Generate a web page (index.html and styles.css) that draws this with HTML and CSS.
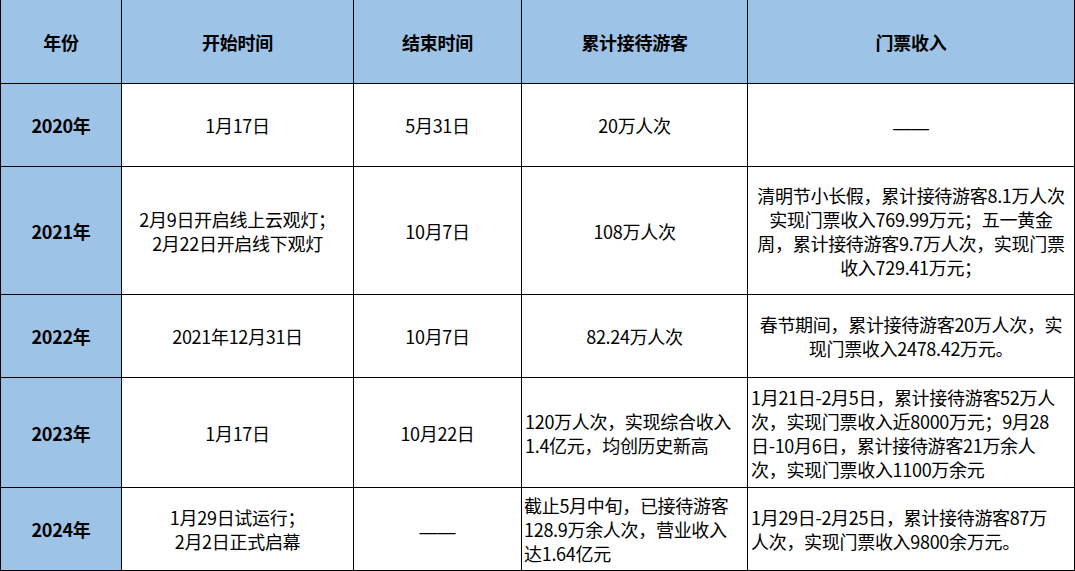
FILE: index.html
```html
<!DOCTYPE html>
<html lang="zh-CN">
<head>
<meta charset="utf-8">
<title>统计表</title>
<link rel="stylesheet" href="styles.css">
</head>
<body>
<div class="sheet">
  <div class="cell head first">年份</div>
  <div class="cell head">开始时间</div>
  <div class="cell head">结束时间</div>
  <div class="cell head">累计接待游客</div>
  <div class="cell head">门票收入</div>

  <div class="cell year first">2020年</div>
  <div class="cell">1月17日</div>
  <div class="cell">5月31日</div>
  <div class="cell">20万人次</div>
  <div class="cell"><span class="dash">——</span></div>

  <div class="cell year first">2021年</div>
  <div class="cell">2月9日开启线上云观灯；<br>2月22日开启线下观灯</div>
  <div class="cell">10月7日</div>
  <div class="cell">108万人次</div>
  <div class="cell">清明节小长假，累计接待游客8.1万人次<br>实现门票收入769.99万元；五一黄金<br>周，累计接待游客9.7万人次，实现门票<br>收入729.41万元；</div>

  <div class="cell year first">2022年</div>
  <div class="cell">2021年12月31日</div>
  <div class="cell">10月7日</div>
  <div class="cell">82.24万人次</div>
  <div class="cell">春节期间，累计接待游客20万人次，实<br>现门票收入2478.42万元。</div>

  <div class="cell year first">2023年</div>
  <div class="cell">1月17日</div>
  <div class="cell">10月22日</div>
  <div class="cell left">120万人次，实现综合收入<br>1.4亿元，均创历史新高</div>
  <div class="cell left">1月21日-2月5日，累计接待游客52万人<br>次，实现门票收入近8000万元；9月28<br>日-10月6日，累计接待游客21万余人<br>次，实现门票收入1100万余元</div>

  <div class="cell year first">2024年</div>
  <div class="cell">1月29日试运行；<br>2月2日正式启幕</div>
  <div class="cell"><span class="dash">——</span></div>
  <div class="cell left tight">截止5月中旬，已接待游客<br>128.9万余人次，营业收入<br>达1.64亿元</div>
  <div class="cell left">1月29日-2月25日，累计接待游客87万<br>人次，实现门票收入9800余万元。</div>
</div>
</body>
</html>
```
FILE: styles.css
```css
html, body {
  margin: 0;
  padding: 0;
  background: #ffffff;
}

body {
  font-family: "Microsoft YaHei", "Noto Sans CJK SC", "Noto Sans", sans-serif;
  font-size: 18px;
  color: #000000;
}

.sheet {
  display: grid;
  grid-template-columns: 122px 232px 168px 226px 327px;
  grid-template-rows: 84px 83px 128px 83px 110px 83px;
  width: 1075px;
  height: 571px;
}

.cell {
  box-sizing: border-box;
  border-right: 1px solid #000000;
  border-bottom: 1px solid #000000;
  display: flex;
  align-items: center;
  justify-content: center;
  text-align: center;
  line-height: 24px;
  padding: 0 3px;
  white-space: nowrap;
  overflow: hidden;
  letter-spacing: -0.3px;
}

.first {
  border-left: 1px solid #000000;
}

.head,
.year {
  background: #9dc3e6;
  font-weight: 700;
}

.left {
  justify-content: flex-start;
  text-align: left;
}

.tight {
  padding-left: 2px;
}

.dash {
  font-family: "Liberation Sans", sans-serif;
  letter-spacing: 0;
  position: relative;
  top: 3px;
}
```
